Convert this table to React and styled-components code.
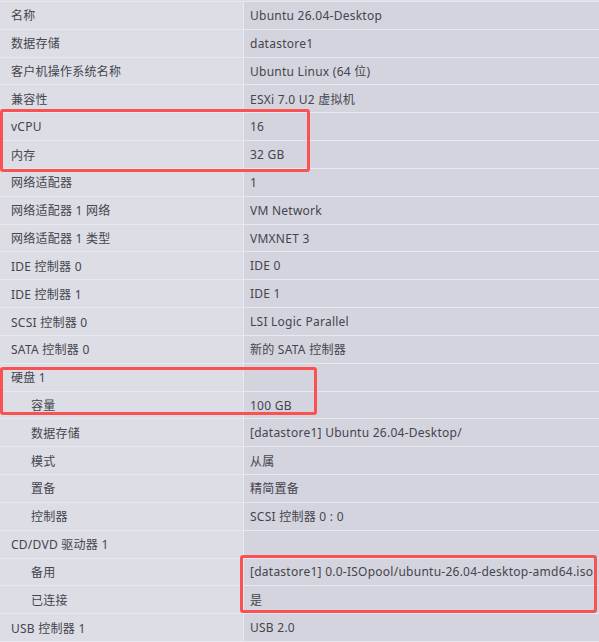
import React from 'react';
import styled, { createGlobalStyle } from 'styled-components';

const GlobalStyle = createGlobalStyle`
  html, body {
    margin: 0;
    padding: 0;
    background: #dcdde5;
  }
  body {
    font-family: "Noto Sans", "Noto Sans CJK SC", sans-serif;
  }
`;

const Table = styled.div`
  width: 599px;
  padding-top: 1px;
  border-bottom: 1px solid #e8e8ef;
`;

const Group = styled.div`
  position: relative;

  &::after {
    content: '';
    position: absolute;
    left: ${(p) => p.$left}px;
    width: ${(p) => p.$width}px;
    top: ${(p) => p.$top}px;
    bottom: ${(p) => p.$bottom}px;
    border: 3px solid #fa5252;
    border-radius: 3px;
    box-sizing: border-box;
    pointer-events: none;
  }
`;

const Row = styled.div`
  display: grid;
  grid-template-columns: 244px 1fr;
  height: 27.83px;
  box-sizing: border-box;
  border-top: 1px solid #e8e8ef;
`;

const Label = styled.div`
  display: flex;
  align-items: center;
  padding-left: ${(p) => (p.$indent ? 31 : 11)}px;
  background: #dcdde5;
  border-right: 1px solid #e8e8ef;
  color: #45454d;
  font-size: 12px;
  letter-spacing: 0.25px;
  white-space: nowrap;
`;

const Value = styled.div`
  display: flex;
  align-items: center;
  padding-left: 6px;
  background: #d3d4de;
  color: #45454d;
  font-size: 12px;
  letter-spacing: 0.25px;
  white-space: nowrap;
`;

const Item = ({ label, value, indent }) => (
  <Row>
    <Label $indent={indent}>{label}</Label>
    <Value>{value}</Value>
  </Row>
);

const App = () => (
  <>
    <GlobalStyle />
    <Table>
      <Item label="名称" value="Ubuntu 26.04-Desktop" />
      <Item label="数据存储" value="datastore1" />
      <Item label="客户机操作系统名称" value="Ubuntu Linux (64 位)" />
      <Item label="兼容性" value="ESXi 7.0 U2 虚拟机" />
      <Group $left={0} $width={310} $top={-3} $bottom={-4}>
        <Item label="vCPU" value="16" />
        <Item label="内存" value="32 GB" />
      </Group>
      <Item label="网络适配器" value="1" />
      <Item label="网络适配器 1 网络" value="VM Network" />
      <Item label="网络适配器 1 类型" value="VMXNET 3" />
      <Item label="IDE 控制器 0" value="IDE 0" />
      <Item label="IDE 控制器 1" value="IDE 1" />
      <Item label="SCSI 控制器 0" value="LSI Logic Parallel" />
      <Item label="SATA 控制器 0" value="新的 SATA 控制器" />
      <Group $left={0} $width={317} $top={4} $bottom={3}>
        <Item label="硬盘 1" value="" />
        <Item label="容量" value="100 GB" indent />
      </Group>
      <Item label="数据存储" value="[datastore1] Ubuntu 26.04-Desktop/" indent />
      <Item label="模式" value="从属" indent />
      <Item label="置备" value="精简置备" indent />
      <Item label="控制器" value="SCSI 控制器 0 : 0" indent />
      <Item label="CD/DVD 驱动器 1" value="" />
      <Group $left={240} $width={357} $top={-3} $bottom={0}>
        <Item label="备用" value="[datastore1] 0.0-ISOpool/ubuntu-26.04-desktop-amd64.iso" indent />
        <Item label="已连接" value="是" indent />
      </Group>
      <Item label="USB 控制器 1" value="USB 2.0" />
    </Table>
  </>
);

export default App;
